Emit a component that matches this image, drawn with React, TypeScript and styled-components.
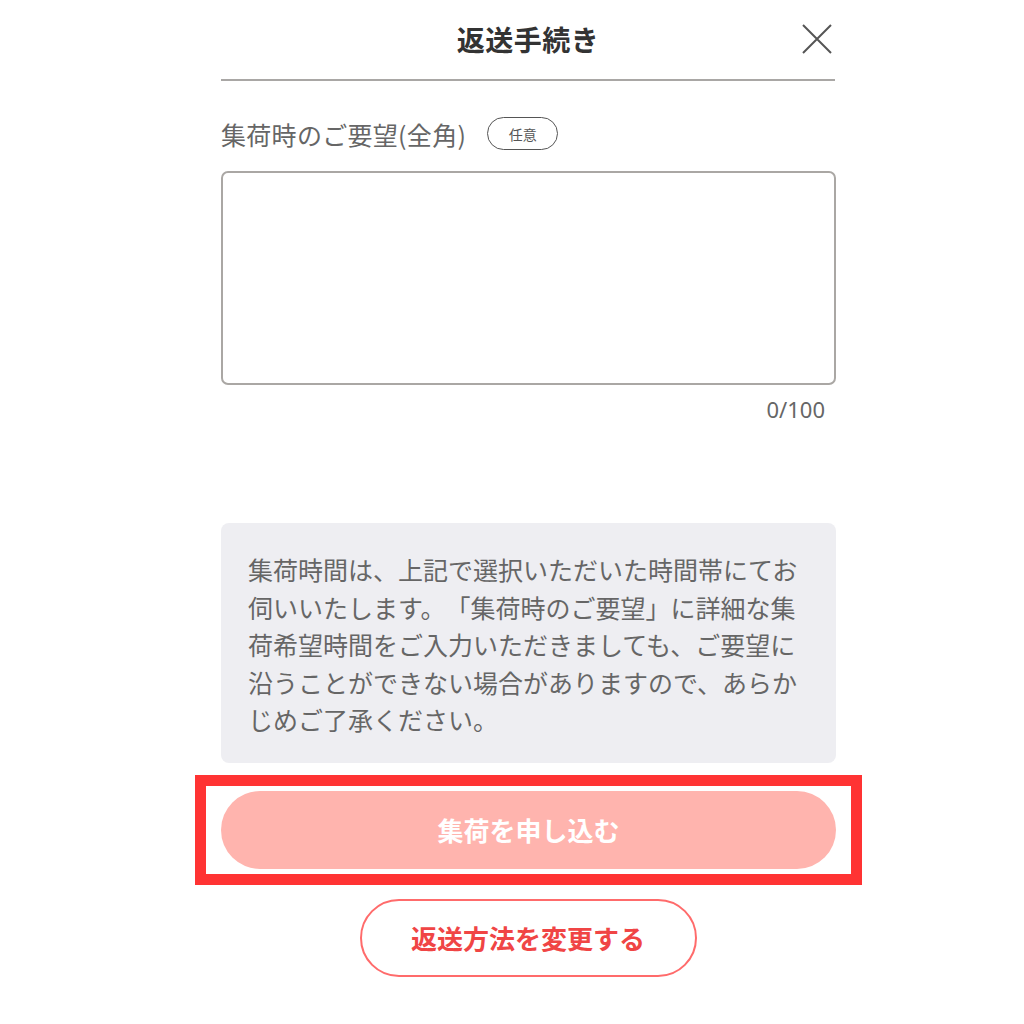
import React from "react";
import styled, { createGlobalStyle } from "styled-components";

const Global = createGlobalStyle`
  html, body { margin: 0; padding: 0; background: #ffffff; }
  body { font-family: "Noto Sans CJK JP", "Noto Sans", sans-serif; }
  * { box-sizing: border-box; }
`;

const Page = styled.div`
  width: 1024px;
  min-height: 1024px;
  padding-left: 221px;
`;

const Column = styled.div`
  width: 614px;
  display: flex;
  flex-direction: column;
`;

const Header = styled.header`
  height: 81px;
  display: grid;
  grid-template-columns: 1fr auto 1fr;
  align-items: center;
  border-bottom: 2px solid #a9a7a5;
  padding-bottom: 2px;
`;

const Title = styled.h1`
  grid-column: 2;
  margin: 0;
  font-size: 28px;
  font-weight: 700;
  color: #333333;
  letter-spacing: 0.5px;
`;

const CloseButton = styled.button`
  grid-column: 3;
  justify-self: end;
  margin-right: 2px;
  width: 32px;
  height: 32px;
  padding: 0;
  border: none;
  background: transparent;
  display: flex;
  align-items: center;
  justify-content: center;
`;

const LabelRow = styled.div`
  margin-top: 36px;
  height: 33px;
  display: flex;
  align-items: center;
  gap: 21px;
`;

const Label = styled.span`
  font-size: 25px;
  color: #666666;
  letter-spacing: 0.3px;
`;

const Badge = styled.span`
  width: 71px;
  height: 33px;
  border: 1.5px solid #555555;
  border-radius: 17px;
  display: flex;
  align-items: center;
  justify-content: center;
  font-size: 14px;
  color: #555555;
`;

const TextArea = styled.textarea`
  margin-top: 21px;
  width: 615px;
  height: 214px;
  border: 2px solid #aaa7a4;
  border-radius: 7px;
  resize: none;
  background: #ffffff;
  outline: none;
`;

const Counter = styled.div`
  margin-top: 11px;
  align-self: flex-end;
  margin-right: 10px;
  font-size: 22px;
  line-height: 26px;
  color: #666666;
  font-family: "Noto Sans", "Noto Sans CJK JP", sans-serif;
`;

const Notice = styled.div`
  margin-top: 101px;
  width: 615px;
  background: #eeeef2;
  border-radius: 8px;
  padding: 28px 24px 24px 27px;
  font-size: 25px;
  line-height: 37.5px;
  color: #666666;
  text-spacing-trim: space-all;
`;

const HighlightFrame = styled.div`
  margin: 12px -27px 0 -26px;
  border: 11px solid #ff3333;
  padding: 5px 15px;
  background: #ffffff;
`;

const PrimaryButton = styled.button`
  width: 615px;
  height: 78px;
  border: none;
  border-radius: 39px;
  background: #ffb4ae;
  color: #ffffff;
  font-family: inherit;
  font-size: 26px;
  font-weight: 700;
  display: flex;
  align-items: center;
  justify-content: center;
`;

const SecondaryButton = styled.button`
  margin-top: 14px;
  align-self: center;
  width: 337px;
  height: 78px;
  border: 2px solid #ff6b6b;
  border-radius: 39px;
  background: #ffffff;
  color: #f04545;
  font-family: inherit;
  font-size: 26px;
  font-weight: 700;
  display: flex;
  align-items: center;
  justify-content: center;
`;

export default function App() {
  return (
    <>
      <Global />
      <Page>
        <Column>
          <Header>
            <Title>返送手続き</Title>
            <CloseButton aria-label="閉じる">
              <svg width="32" height="32" viewBox="0 0 32 32">
                <path d="M2 2 L30 30 M30 2 L2 30" stroke="#555555" strokeWidth="2" fill="none" />
              </svg>
            </CloseButton>
          </Header>
          <LabelRow>
            <Label>集荷時のご要望(全角)</Label>
            <Badge>任意</Badge>
          </LabelRow>
          <TextArea />
          <Counter>0/100</Counter>
          <Notice>
            集荷時間は、上記で選択いただいた時間帯にてお伺いいたします。「集荷時のご要望」に詳細な集荷希望時間をご入力いただきましても、ご要望に沿うことができない場合がありますので、あらかじめご了承ください。
          </Notice>
          <HighlightFrame>
            <PrimaryButton>集荷を申し込む</PrimaryButton>
          </HighlightFrame>
          <SecondaryButton>返送方法を変更する</SecondaryButton>
        </Column>
      </Page>
    </>
  );
}
